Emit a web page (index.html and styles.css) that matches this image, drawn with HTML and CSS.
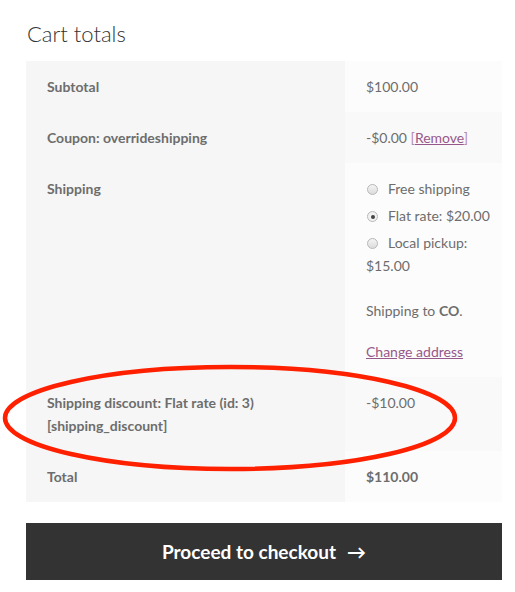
FILE: index.html
```html
<!DOCTYPE html>
<html lang="en">
<head>
<meta charset="utf-8">
<title>Cart totals</title>
<link rel="stylesheet" href="styles.css">
</head>
<body>
<div class="cart-collaterals">
  <h2 class="title">Cart totals</h2>
  <div class="table-wrap">
    <table class="totals">
      <tbody>
        <tr>
          <th>Subtotal</th>
          <td>$100.00</td>
        </tr>
        <tr>
          <th>Coupon: overrideshipping</th>
          <td>-$0.00 <a href="#" class="remove">[<span class="u">Remove</span>]</a></td>
        </tr>
        <tr>
          <th>Shipping</th>
          <td>
            <ul class="methods">
              <li><span class="radio"></span>Free shipping</li>
              <li><span class="radio checked"></span>Flat rate: $20.00</li>
              <li><span class="radio"></span>Local pickup: $15.00</li>
            </ul>
            <p class="dest">Shipping to <strong>CO</strong>.</p>
            <p class="change"><a href="#" class="link">Change address</a></p>
          </td>
        </tr>
        <tr>
          <th>Shipping discount: Flat rate (id: 3) [shipping_discount]</th>
          <td>-$10.00</td>
        </tr>
        <tr>
          <th>Total</th>
          <td><strong>$110.00</strong></td>
        </tr>
      </tbody>
    </table>
    <svg class="annotation" width="470" height="120" viewBox="0 0 470 120" aria-hidden="true">
      <ellipse cx="230" cy="57" rx="225" ry="51" fill="none" stroke="#ff2000" stroke-width="4.5"/>
    </svg>
  </div>
  <a href="#" class="checkout">Proceed to checkout <span class="arrow">&#8594;</span></a>
</div>
</body>
</html>
```
FILE: styles.css
```css
html, body {
  margin: 0;
  padding: 0;
  background: #ffffff;
}
body {
  font-family: "Source Sans Pro", Lato, "Noto Sans", sans-serif;
  color: #6d6d6d;
  font-size: 14px;
}
.cart-collaterals {
  width: 476px;
  margin-left: 26px;
  padding-top: 18px;
}
.title {
  margin: 0 0 11px 1px;
  font-weight: 300;
  font-size: 22px;
  line-height: 32px;
  color: #333333;
}
.table-wrap {
  position: relative;
}
.totals {
  width: 100%;
  border-collapse: collapse;
  border-spacing: 0;
  table-layout: fixed;
}
.totals th, .totals td {
  padding: 14px 21px;
  line-height: 23px;
  vertical-align: top;
  text-align: left;
}
.totals th {
  width: 277px;
  font-weight: 700;
  background: #f6f6f6;
  color: #6d6d6d;
}
.totals td {
  padding-right: 8px;
  background: #fcfcfc;
}
.totals tr:nth-child(2n) td {
  background: #f9f9f9;
}
.totals strong {
  font-weight: 700;
}
.remove {
  color: #b58aac;
  text-decoration: none;
}
.remove .u, .link {
  color: #96588a;
  text-decoration: underline;
}
.methods {
  list-style: none;
  margin: 0;
  padding: 0;
}
.methods li {
  margin: 0 0 4px 0;
}
.methods li:last-child {
  margin-bottom: 0;
}
.radio {
  display: inline-block;
  box-sizing: border-box;
  width: 11px;
  height: 11px;
  border-radius: 50%;
  border: 1px solid #b9b9b9;
  background: linear-gradient(#f4f4f4, #dcdcdc);
  margin: 0 10px 0 1px;
  vertical-align: -1px;
  position: relative;
}
.radio.checked {
  background: #f2f2f2;
}
.radio.checked::after {
  content: "";
  position: absolute;
  left: 2.5px;
  top: 2.5px;
  width: 4px;
  height: 4px;
  border-radius: 50%;
  background: #444;
}
.dest {
  margin: 22px 0 0 0;
}
.change {
  margin: 18px 0 0 0;
}
.annotation {
  position: absolute;
  left: -26px;
  top: 300px;
  pointer-events: none;
}
.checkout {
  display: flex;
  justify-content: center;
  align-items: center;
  margin-top: 21px;
  height: 57px;
  background: #333333;
  color: #ffffff;
  text-decoration: none;
  font-weight: 700;
  font-size: 19px;
}
.arrow {
  margin-left: 11px;
  font-size: 19px;
}
```
